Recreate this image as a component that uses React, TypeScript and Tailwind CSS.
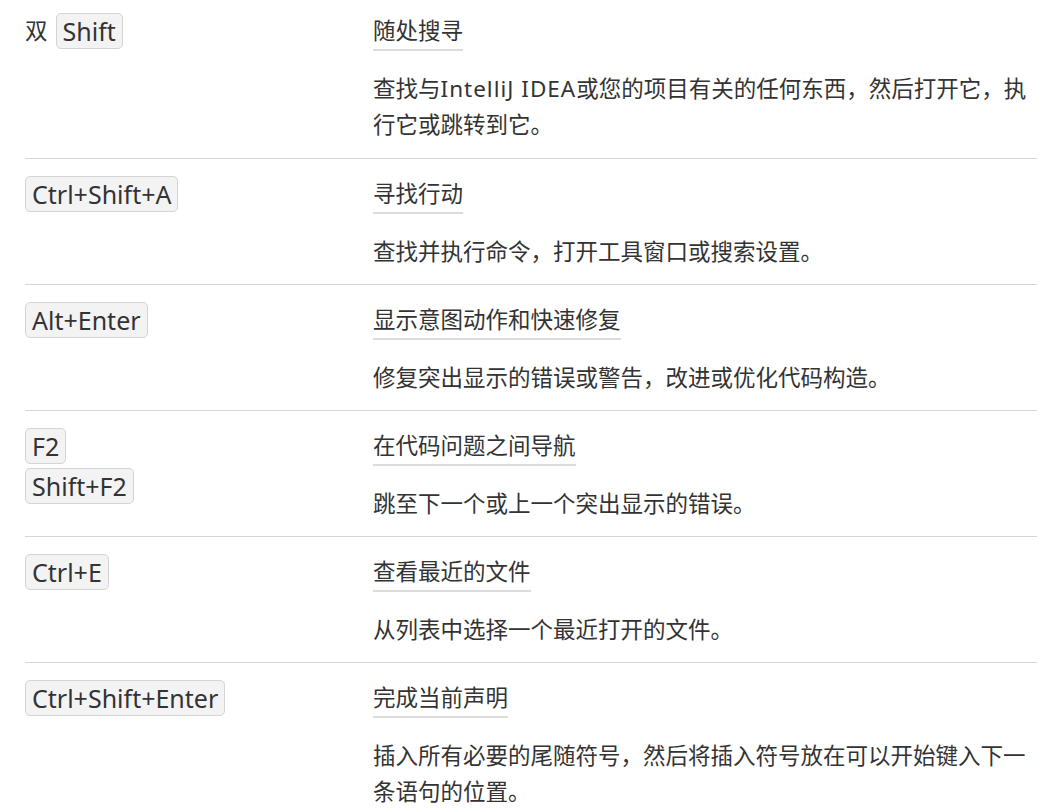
import React from "react";

type Shortcut = {
  keys: React.ReactNode;
  title: string;
  desc: React.ReactNode;
};

const Kbd = ({ children }: { children: React.ReactNode }) => (
  <kbd className="inline-block h-[36px] px-[6px] leading-[34px] bg-[#f3f3f3] border border-[#d4d4d4] rounded-[5px] text-[#333] text-[25px] font-[inherit]">
    {children}
  </kbd>
);

const shortcuts: Shortcut[] = [
  {
    keys: (
      <span className="flex items-center">
        <span className="mr-[8px]">双</span>
        <Kbd>Shift</Kbd>
      </span>
    ),
    title: "随处搜寻",
    desc: (
      <>
        查找与<span className="tracking-[1px]">IntelliJ IDEA</span>
        或您的项目有关的任何东西，然后打开它，执行它或跳转到它。
      </>
    ),
  },
  {
    keys: <Kbd>Ctrl+Shift+A</Kbd>,
    title: "寻找行动",
    desc: "查找并执行命令，打开工具窗口或搜索设置。",
  },
  {
    keys: <Kbd>Alt+Enter</Kbd>,
    title: "显示意图动作和快速修复",
    desc: "修复突出显示的错误或警告，改进或优化代码构造。",
  },
  {
    keys: (
      <div className="flex flex-col items-start gap-[4px]">
        <Kbd>F2</Kbd>
        <Kbd>Shift+F2</Kbd>
      </div>
    ),
    title: "在代码问题之间导航",
    desc: "跳至下一个或上一个突出显示的错误。",
  },
  {
    keys: <Kbd>Ctrl+E</Kbd>,
    title: "查看最近的文件",
    desc: "从列表中选择一个最近打开的文件。",
  },
  {
    keys: <Kbd>Ctrl+Shift+Enter</Kbd>,
    title: "完成当前声明",
    desc: "插入所有必要的尾随符号，然后将插入符号放在可以开始键入下一条语句的位置。",
  },
];

export default function App() {
  return (
    <div
      className="min-h-screen bg-white pl-[25px] pr-px text-[22.5px] text-[#333]"
      style={{ fontFamily: '"Noto Sans", "Noto Sans CJK SC", sans-serif' }}
    >
      {shortcuts.map((item, i) => (
        <div
          key={item.title}
          className={
            i === 0
              ? "flex pt-[13px] pb-[15px]"
              : "flex pt-[17px] pb-[14px] border-t border-[#d6d6d6]"
          }
        >
          {/* keys */}
          <div className="w-[348px] shrink-0">{item.keys}</div>

          {/* title + description */}
          <div className="flex-1 min-w-0 max-w-[658px]">
            <h3 className="inline-block leading-[36px] border-b-2 border-[#dcdcdc] font-normal">
              {item.title}
            </h3>
            <p className="mt-[20px] leading-[36px]">{item.desc}</p>
          </div>
        </div>
      ))}
    </div>
  );
}
